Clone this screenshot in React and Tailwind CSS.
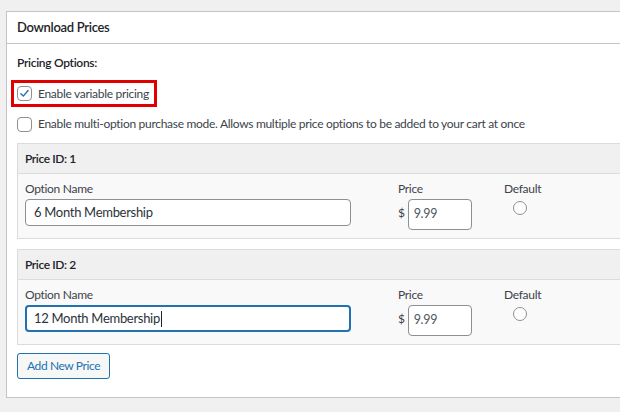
import React from 'react';

const font = { fontFamily: 'Lato, "Noto Sans", sans-serif' };

const Checkbox = ({ checked }) => (
  <span className="flex h-[15px] w-[15px] shrink-0 items-center justify-center rounded-[4px] border border-[#8c8f94] bg-white">
    {checked && (
      <svg viewBox="0 0 20 20" className="h-[15px] w-[15px]">
        <path d="M4.5 10.5 L8.2 14 L15.5 5.5" fill="none" stroke="#2271b1" strokeWidth="2.2" strokeLinecap="round" strokeLinejoin="round" />
      </svg>
    )}
  </span>
);

const PriceRow = ({ id, name, focused }) => (
  <div className="w-[700px] border border-[#dcdcde]">
    {/* header */}
    <div className="flex h-[30px] items-center border-b border-[#dcdcde] bg-[#f0f0f1] px-[7px] font-semibold tracking-[-0.4px] text-[#1d2327]">
      Price ID: {id}
    </div>
    {/* body */}
    <div className="flex h-[64px] bg-[#f9f9f9] pl-[7px] pt-[6px]">
      <div className="flex w-[373px] flex-col">
        <span className="leading-[18px] text-[#3c434a]">Option Name</span>
        <div
          className={
            focused
              ? 'mt-[1px] flex h-[27px] w-[326px] items-center rounded-[4px] border-2 border-[#2271b1] bg-white pl-[7px] text-[13px] text-[#2c3338]'
              : 'mt-[1px] flex h-[27px] w-[326px] items-center rounded-[4px] border border-[#8c8f94] bg-white pl-[8px] text-[13px] text-[#2c3338]'
          }
        >
          {name}
          {focused && <span className="ml-[1px] h-[16px] w-px bg-[#1d2327]" />}
        </div>
      </div>
      <div className="flex w-[106px] flex-col">
        <span className="leading-[18px] text-[#3c434a]">Price</span>
        <div className="mt-[1px] flex items-center gap-[3px]">
          <span className="-mt-[3px] text-[#3c434a]">$</span>
          <div className="flex h-[31px] w-[64px] items-center rounded-[4px] border border-[#8c8f94] bg-white pl-[5px] text-[12.5px] text-[#50575e]">
            9.99
          </div>
        </div>
      </div>
      <div className="flex flex-col">
        <span className="leading-[18px] text-[#3c434a]">Default</span>
        <span className="ml-[9px] mt-[3px] h-[14px] w-[14px] rounded-full border border-[#8c8f94] bg-white" />
      </div>
    </div>
  </div>
);

export default function App() {
  return (
    <div className="h-[412px] w-[620px] overflow-hidden bg-[#f0f0f1] pl-[6px] pt-[11px] text-[12px] tracking-[-0.3px]" style={font}>
      <div className="w-[720px] border border-[#c3c4c7] bg-white">
        {/* Panel title */}
        <div className="flex h-[32px] items-center border-b border-[#c3c4c7] px-[10px] text-[13px] font-semibold tracking-[-0.3px] text-[#1d2327]">
          Download Prices
        </div>

        <div className="px-[10px] pb-[18px] pt-[10px]">
          <div className="font-semibold leading-[18px] text-[#1d2327]">Pricing Options:</div>

          {/* Highlighted option */}
          <div className="mt-[8px] -ml-[6px] flex h-[27px] w-[146px] items-center gap-[6px] whitespace-nowrap border-[3px] border-[#e00000] pl-[3px]">
            <Checkbox checked />
            <span className="text-[#3c434a]">Enable variable pricing</span>
          </div>

          <div className="mt-[8px] flex h-[18px] items-center gap-[6px] whitespace-nowrap">
            <Checkbox />
            <span className="text-[#3c434a]">
              Enable multi-option purchase mode. Allows multiple price options to be added to your cart at once
            </span>
          </div>

          <div className="mt-[10px] flex flex-col gap-[10px]">
            <PriceRow id={1} name="6 Month Membership" />
            <PriceRow id={2} name="12 Month Membership" focused />
          </div>

          <button className="mt-[8px] h-[26px] rounded-[3px] border border-[#2271b1] bg-[#f6f7f7] px-[9px] tracking-[-0.4px] text-[#2271b1]">
            Add New Price
          </button>
        </div>
      </div>
    </div>
  );
}
